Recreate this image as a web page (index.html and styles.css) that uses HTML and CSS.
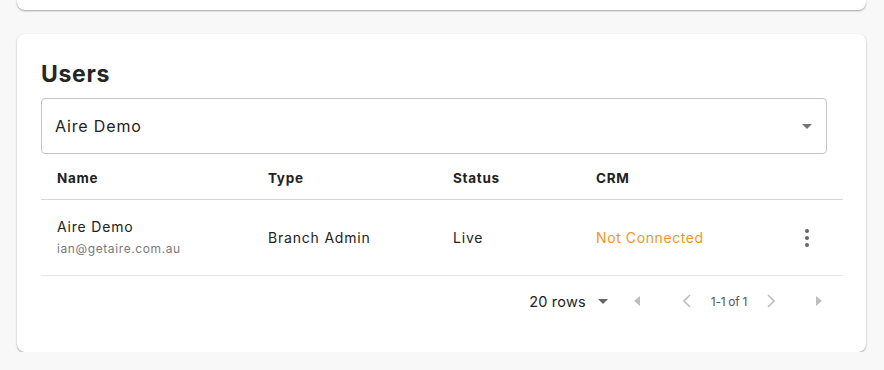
FILE: index.html
```html
<!DOCTYPE html>
<html>
<head>
<meta charset="utf-8">
<link rel="stylesheet" href="styles.css">
</head>
<body>
<div class="page">
  <div class="card card-top"></div>
  <div class="card users">
    <h2 class="title">Users</h2>
    <div class="select">
      <span class="select-value">Aire Demo</span>
      <svg class="caret" width="10" height="5" viewBox="0 0 10 5"><path d="M0 0h10L5 5z" fill="#757575"/></svg>
    </div>
    <div class="table">
      <div class="row head">
        <div>Name</div>
        <div>Type</div>
        <div>Status</div>
        <div>CRM</div>
        <div></div>
      </div>
      <div class="row body">
        <div class="name">
          <div class="name-main">Aire Demo</div>
          <div class="name-sub">ian@getaire.com.au</div>
        </div>
        <div>Branch Admin</div>
        <div>Live</div>
        <div class="crm">Not Connected</div>
        <div class="actions">
          <svg width="4" height="18" viewBox="0 0 4 18"><circle cx="2" cy="2" r="2" fill="#666"/><circle cx="2" cy="9" r="2" fill="#666"/><circle cx="2" cy="16" r="2" fill="#666"/></svg>
        </div>
      </div>
      <div class="pager">
        <span class="rows">20 rows</span>
        <svg class="rows-caret" width="10" height="5" viewBox="0 0 10 5"><path d="M0 0h10L5 5z" fill="#666"/></svg>
        <span class="pbtn first"><svg width="8" height="12" viewBox="0 0 8 12"><path d="M7 1v10L1 6z" fill="#bdbdbd"/></svg></span>
        <span class="pbtn prev"><svg width="8" height="14" viewBox="0 0 8 14"><path d="M7 1L1 7l6 6" fill="none" stroke="#bdbdbd" stroke-width="1.6"/></svg></span>
        <span class="range">1-1 of 1</span>
        <span class="pbtn next"><svg width="8" height="14" viewBox="0 0 8 14"><path d="M1 1l6 6-6 6" fill="none" stroke="#bdbdbd" stroke-width="1.6"/></svg></span>
        <span class="pbtn last"><svg width="8" height="12" viewBox="0 0 8 12"><path d="M1 1v10l6-5z" fill="#bdbdbd"/></svg></span>
      </div>
    </div>
  </div>
</div>
</body>
</html>
```

FILE: styles.css
```css
html, body {
  margin: 0;
  padding: 0;
  background: #f8f8f8;
  font-family: "Inter", "Open Sans", sans-serif;
  color: #222;
}
.page {
  padding: 0 18px 0 17px;
  display: flex;
  flex-direction: column;
}
.card {
  background: #fff;
  border-radius: 8px;
  box-shadow: 0 1px 2px rgba(0,0,0,0.35);
}
.card-top {
  height: 10px;
  margin-top: 0;
  border-radius: 0 0 8px 8px;
}
.users {
  margin-top: 24px;
  padding: 24px 23px 26px 24px;
  height: 268px;
}
.title {
  margin: 0;
  font-size: 23px;
  font-weight: 700;
  line-height: 32px;
  color: #262626;
  letter-spacing: 0.7px;
}
.select {
  margin-top: 8px;
  margin-right: 16px;
  height: 54px;
  border: 1px solid #c4c4c4;
  border-radius: 4px;
  display: flex;
  align-items: center;
  justify-content: space-between;
  padding: 0 14px 0 13px;
}
.select-value {
  font-size: 16px;
  color: #222;
  letter-spacing: 0.85px;
}
.row {
  display: grid;
  grid-template-columns: 211px 185px 143px 1fr 40px;
  padding: 0 16px;
  align-items: center;
}
.head {
  height: 46px;
  border-bottom: 1px solid #d6d6d6;
  font-size: 13.5px;
  font-weight: 700;
  padding-top: 2px;
  box-sizing: border-box;
  color: #222;
  letter-spacing: 0.7px;
}
.body {
  height: 75px;
  border-bottom: 1px solid #e6e6e6;
  font-size: 14px;
  letter-spacing: 0.8px;
  color: #222;
}
.name-main {
  font-size: 14px;
  line-height: 20px;
}
.name-sub {
  font-size: 12px;
  color: #7a7a7a;
  line-height: 18px;
  margin-top: 3px;
  letter-spacing: 0.6px;
}
.crm {
  color: #f7941d;
  letter-spacing: 0.6px;
}
.actions {
  display: flex;
  justify-content: center;
}
.pager {
  display: flex;
  align-items: center;
  justify-content: flex-end;
  height: 50px;
  padding-right: 12px;
  font-size: 14px;
}
.rows {
  font-size: 14.5px;
  color: #222;
  letter-spacing: 0.2px;
}
.rows-caret {
  margin-left: 12px;
  margin-right: 17px;
}
.pbtn {
  width: 24px;
  height: 24px;
  display: flex;
  align-items: center;
  justify-content: center;
}
.first { margin-right: 26px; }
.prev { margin-right: 12px; }
.next { margin-left: 12px; margin-right: 24px; }
.range {
  font-size: 12px;
  color: #555;
  letter-spacing: -0.3px;
}
```
